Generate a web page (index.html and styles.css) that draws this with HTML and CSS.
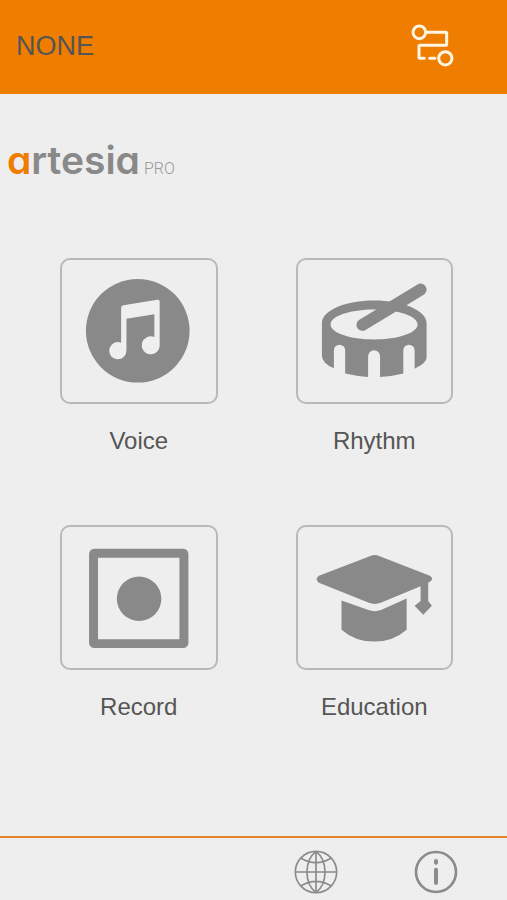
FILE: index.html
```html
<!DOCTYPE html>
<html lang="en">
<head>
<meta charset="utf-8">
<meta name="viewport" content="width=device-width, initial-scale=1">
<title>Artesia Pro</title>
<link rel="stylesheet" href="styles.css">
</head>
<body>
<header class="topbar">
  <span class="device">NONE</span>
  <button class="icon-button" type="button" aria-label="Connect">
    <svg width="44" height="44" viewBox="0 0 132 132" fill="none" stroke="#fff5e4" stroke-width="9" stroke-linecap="round" stroke-linejoin="round">
      <circle cx="25" cy="25" r="19"/>
      <circle cx="103" cy="103" r="20"/>
      <path d="M46 25H104Q107 25 107 28V61Q107 64 104 64H27Q24 64 24 67V100Q24 103 27 103H40M56 103H72"/>
    </svg>
  </button>
</header>
<main class="content">
  <h1 class="logo"><span class="logo-name"><span class="logo-accent">a</span>rtesia</span><span class="logo-suffix">PRO</span></h1>
  <nav class="grid" aria-label="Main menu">
    <button class="item" type="button">
      <span class="tile">
        <svg viewBox="36 30 462 426">
          <circle cx="264" cy="243" r="156" fill="#898989"/>
          <path fill="#efefef" d="M214 174Q214 167 221 166L323 150Q330 149 330 156V286A27 27 0 1 1 314 262V193L230 207V302A26 26 0 1 1 214 279Z"/>
        </svg>
      </span>
      <span class="label">Voice</span>
    </button>
    <button class="item" type="button">
      <span class="tile">
        <svg viewBox="39 30 462 426">
          <path fill="#898989" fill-rule="evenodd" d="M111 220C111 182 181 152 268 152S426 182 426 220V322C426 336 412 347 390 357V302A17 17 0 0 0 356 302V372Q322 381 286 382V320A17 17 0 0 0 250 320V382Q214 380 181 372V302A17 17 0 0 0 147 302V356Q111 340 111 318ZM137 224C137 249 196 269 268 269S399 249 399 224S340 179 268 179S137 199 137 224Z"/>
          <path d="M233 225L408 119" fill="none" stroke="#898989" stroke-width="36" stroke-linecap="round"/>
        </svg>
      </span>
      <span class="label">Rhythm</span>
    </button>
    <button class="item" type="button">
      <span class="tile">
        <svg viewBox="36 36 462 426">
          <rect x="131" y="115" width="272" height="272" rx="2" fill="none" stroke="#898989" stroke-width="27" stroke-linejoin="round"/>
          <circle cx="268" cy="252" r="67" fill="#898989"/>
        </svg>
      </span>
      <span class="label">Record</span>
    </button>
    <button class="item" type="button">
      <span class="tile">
        <svg viewBox="39 36 462 426">
          <g fill="#898989">
            <path d="M257 123Q270 118 283 123L436 183Q452 193 431 204V259L442 273L416 300L390 273L408 259V214L288 264Q270 271 252 264L102 204Q88 193 102 183Z"/>
            <path d="M170 257L251 286Q270 293 289 286L366 251V345Q325 381 268 381T170 345Z"/>
          </g>
        </svg>
      </span>
      <span class="label">Education</span>
    </button>
  </nav>
</main>
<footer class="bottombar">
  <button class="icon-button" type="button" aria-label="Language">
    <svg width="44" height="44" viewBox="0 0 132 132" fill="none" stroke="#8b8b8b" stroke-width="5">
      <circle cx="66" cy="66" r="62"/>
      <path d="M66 4V128M4 66H128M66 4C30 32 30 100 66 128M66 4C102 32 102 100 66 128M20 24Q66 52 112 24M20 108Q66 80 112 108"/>
    </svg>
  </button>
  <button class="icon-button" type="button" aria-label="Information">
    <svg width="44" height="44" viewBox="0 0 132 132" fill="none" stroke="#8b8b8b">
      <circle cx="66" cy="66" r="60" stroke-width="8"/>
      <path d="M66 33V38M66 59V99" stroke-width="12" stroke-linecap="round"/>
    </svg>
  </button>
</footer>
</body>
</html>
```

FILE: styles.css
```css
* {
  box-sizing: border-box;
}

body {
  margin: 0;
  min-height: 100vh;
  display: flex;
  flex-direction: column;
  background: #eeeeee;
  color: #555555;
  font-family: "Liberation Sans", Arial, sans-serif;
}

button {
  margin: 0;
  padding: 0;
  border: 0;
  background: none;
  color: inherit;
  font: inherit;
  cursor: pointer;
}

svg {
  display: block;
}

.topbar {
  display: flex;
  align-items: center;
  justify-content: space-between;
  padding: 24px 52px 26px 16px;
  background: #ee7d00;
}

.device {
  font-size: 27px;
  line-height: 32px;
}

.content {
  flex: 1;
}

.logo {
  display: flex;
  align-items: baseline;
  gap: 4px;
  margin: 0;
  padding: 44px 7px 67px;
  line-height: 44px;
}

.logo-name {
  color: #898989;
  font-family: Inter, sans-serif;
  font-size: 39px;
  font-weight: 600;
  font-feature-settings: "cv11";
}

.logo-accent {
  color: #ee7d00;
}

.logo-suffix {
  color: #999999;
  font-family: Roboto, sans-serif;
  font-size: 16px;
  font-weight: 300;
}

.grid {
  display: grid;
  grid-template-columns: 1fr 1fr;
  gap: 70px 78px;
  padding: 0 54px 70px 60px;
}

.item {
  display: flex;
  flex-direction: column;
  align-items: stretch;
  gap: 23px;
}

.tile {
  border: 2px solid #b9b9b9;
  border-radius: 10px;
}

.label {
  font-size: 24px;
  line-height: 28px;
}

.bottombar {
  display: flex;
  justify-content: flex-end;
  gap: 76px;
  padding: 12px 49px 6px;
  border-top: 2px solid #e48227;
}
```
